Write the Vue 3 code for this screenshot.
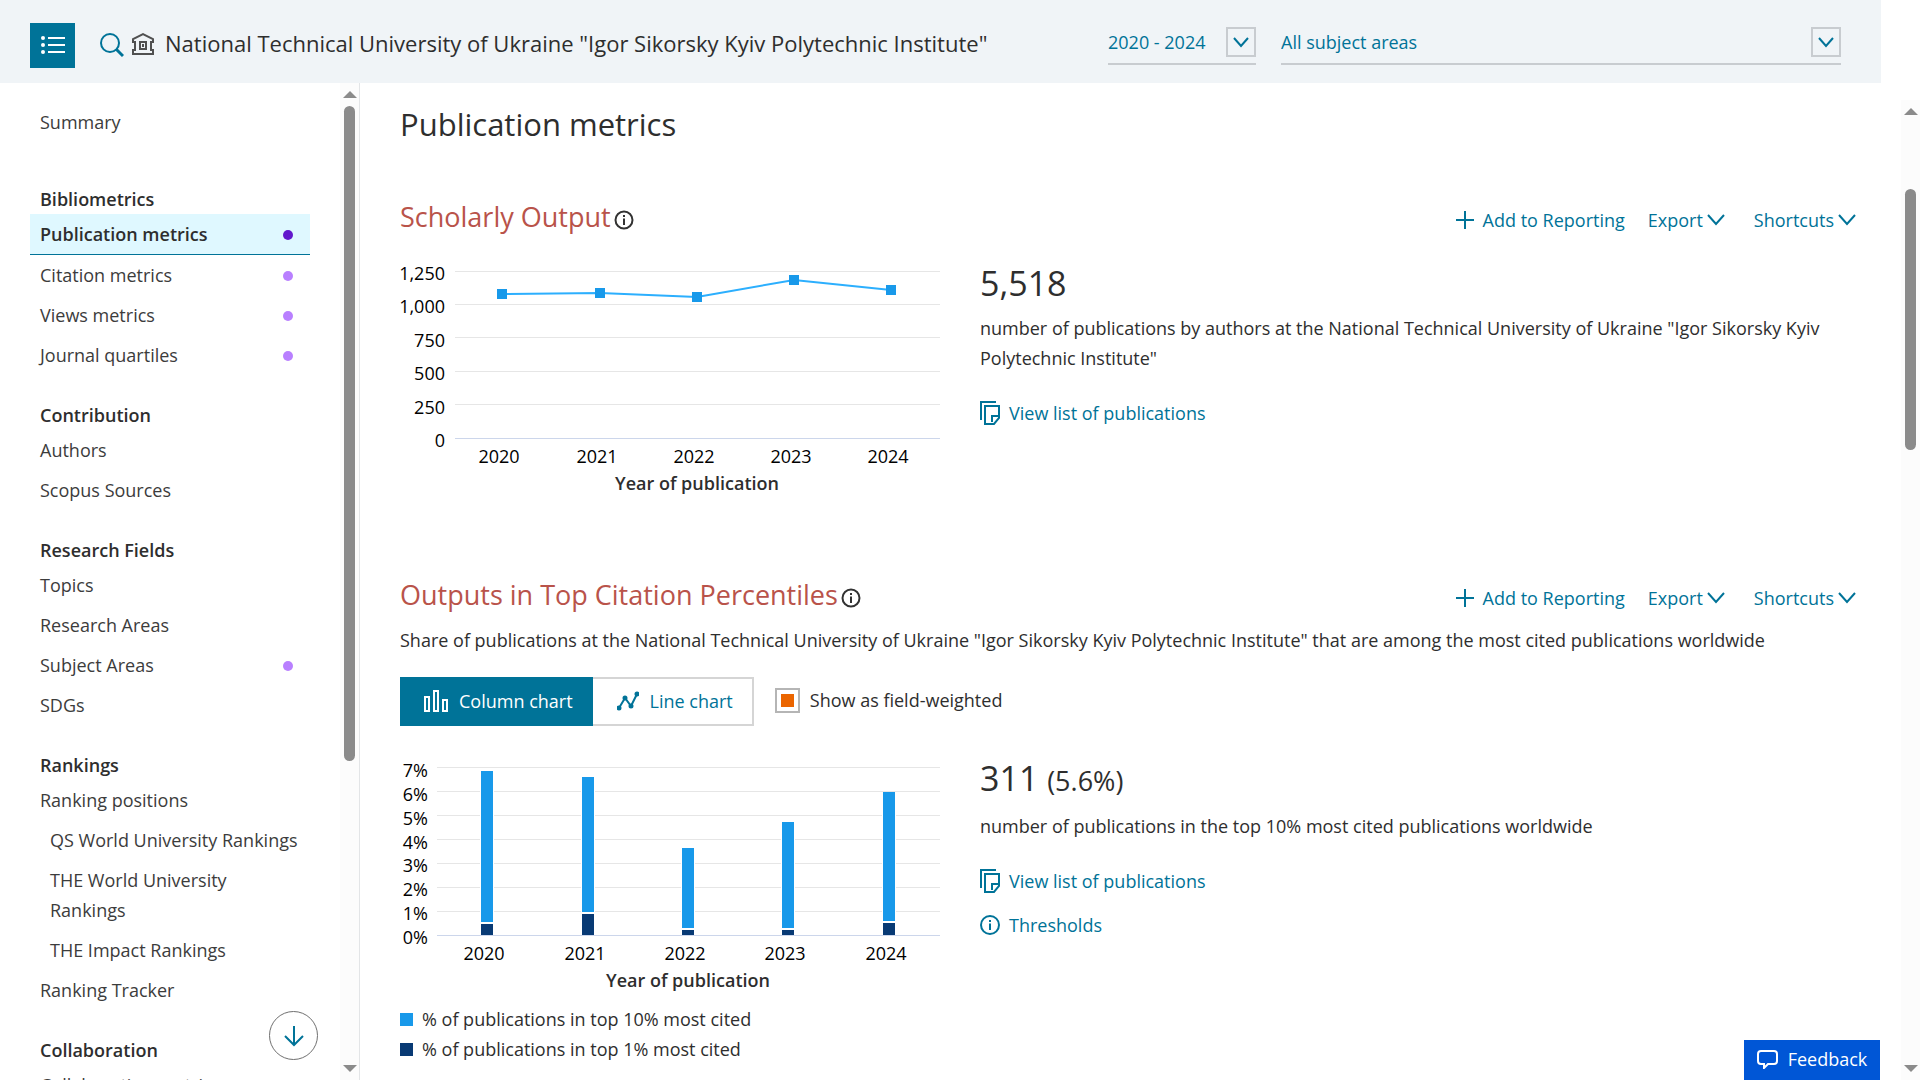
<template>
  <div class="page">
    <header class="top-bar">
      <button type="button" class="menu-btn" aria-label="Menu">
        <svg width="24" height="20" viewBox="0 0 24 20" fill="#fff">
          <circle cx="2" cy="2" r="2" /><circle cx="2" cy="9" r="2" /><circle cx="2" cy="16" r="2" />
          <path d="M7 1h17v2H7zM7 8h17v2H7zM7 15h17v2H7z" />
        </svg>
      </button>
      <button type="button" class="search-btn" aria-label="Search">
        <svg width="24" height="26" viewBox="0 0 24 26" fill="none" stroke="#007398" stroke-width="2">
          <circle cx="10" cy="10" r="9" />
          <path d="M16 16l7 7" stroke-width="3" />
        </svg>
      </button>
      <svg class="institution" width="22" height="24" viewBox="0 0 22 24" fill="none" stroke="#505050" stroke-width="2">
        <path d="M1 10V7l10-5 10 5v3h-2v8h2v4H1v-4h2v-8z" />
        <path d="M8 10h6v7H8zM11 12v3" />
      </svg>
      <h1 class="entity">National Technical University of Ukraine "Igor Sikorsky Kyiv Polytechnic Institute"</h1>
      <div class="picker year">
        <select v-model="year" aria-label="Year range">
          <option>2020 - 2024</option>
          <option>2019 - 2023</option>
        </select>
        <span class="picker-box"><svg width="16" height="11" viewBox="0 0 16 11"><path d="M1 1l7 8 7-8" /></svg></span>
      </div>
      <div class="picker subject">
        <select v-model="subject" aria-label="Subject area">
          <option>All subject areas</option>
          <option>Engineering</option>
        </select>
        <span class="picker-box"><svg width="16" height="11" viewBox="0 0 16 11"><path d="M1 1l7 8 7-8" /></svg></span>
      </div>
    </header>

    <div class="body">
      <aside class="sidebar">
        <nav class="nav">
          <a href="#" class="nav-item summary">Summary</a>
          <div v-for="group in groups" :key="group.title" class="nav-group">
            <h2>{{ group.title }}</h2>
            <a
              v-for="item in group.items"
              :key="item.text"
              href="#"
              class="nav-item"
              :class="{ active: item.active, sub: item.sub }"
            >
              <span>{{ item.text }}</span>
              <i v-if="item.dot" class="dot"></i>
            </a>
          </div>
        </nav>
        <button type="button" class="scroll-down" aria-label="Scroll down">
          <svg width="22" height="22" viewBox="0 0 22 22" fill="none" stroke="#007398" stroke-width="2">
            <path d="M11 1v19M2 11l9 9 9-9" />
          </svg>
        </button>
        <div class="scrollbar nav-scroll">
          <span class="arrow up"></span>
          <span class="thumb"></span>
          <span class="arrow down"></span>
        </div>
      </aside>

      <main class="content">
        <h2 class="page-title">Publication metrics</h2>

        <section v-for="section in sections" :key="section.id" class="metric" :class="section.id">
          <div class="metric-head">
            <h3>{{ section.title }}</h3>
            <svg class="info" width="20" height="20" viewBox="0 0 20 20" fill="none" stroke="#323232" stroke-width="2">
              <circle cx="10" cy="10" r="8.5" />
              <path d="M10 8.5V15M10 5v2" />
            </svg>
            <div class="actions">
              <button type="button" class="link-btn add">
                <svg width="18" height="18" viewBox="0 0 18 18"><path d="M9 0v18M0 9h18" /></svg>
                Add to Reporting
              </button>
              <button type="button" class="link-btn export">
                Export
                <svg width="18" height="12" viewBox="0 0 18 12"><path d="M1 1l8 9 8-9" /></svg>
              </button>
              <button type="button" class="link-btn">
                Shortcuts
                <svg width="18" height="12" viewBox="0 0 18 12"><path d="M1 1l8 9 8-9" /></svg>
              </button>
            </div>
          </div>

          <template v-if="section.id === 'percentiles'">
            <p class="intro">Share of publications at the National Technical University of Ukraine "Igor Sikorsky Kyiv Polytechnic Institute" that are among the most cited publications worldwide</p>
            <div class="toolbar">
              <button type="button" class="tab selected">
                <svg width="26" height="22" viewBox="0 0 26 22" fill="none" stroke="#fff" stroke-width="2">
                  <path d="M2 7h4v14H2zM11 1h4v20h-4zM20 10h4v11h-4z" />
                </svg>
                Column chart
              </button>
              <button type="button" class="tab">
                <svg width="22" height="20" viewBox="0 0 22 20" fill="#007398" stroke="#007398" stroke-width="2">
                  <path d="M2 17L8 7l6 8 6-12" fill="none" />
                  <circle cx="2" cy="17" r="1.5" /><circle cx="8" cy="7" r="1.5" />
                  <circle cx="14" cy="15" r="1.5" /><circle cx="20" cy="3" r="1.5" />
                </svg>
                Line chart
              </button>
              <input id="weighted" v-model="weighted" type="checkbox" />
              <label for="weighted">Show as field-weighted</label>
            </div>
          </template>

          <div class="metric-body">
            <div>
              <svg v-if="section.id === 'output'" class="chart" width="540" height="245">
                <g v-for="(t, i) in lineTicks" :key="t">
                  <line x1="55" x2="540" :y1="183 - i * 33.4" :y2="183 - i * 33.4" :class="{ base: i === 0 }" />
                  <text x="45" :y="192 - i * 33.4" text-anchor="end">{{ t }}</text>
                </g>
                <polyline :points="linePoints.map(p => p.x + ',' + p.y).join(' ')" />
                <rect v-for="p in linePoints" :key="p.year" :x="p.x - 5" :y="p.y - 5" width="10" height="10" fill="#1899ea" />
                <text v-for="p in linePoints" :key="'y' + p.year" :x="p.x - 3" y="208" text-anchor="middle">{{ p.year }}</text>
                <text x="297" y="235" text-anchor="middle" class="axis-title">Year of publication</text>
              </svg>
              <svg v-else class="chart" width="540" height="250">
                <g v-for="i in 8" :key="i">
                  <line x1="37" x2="540" :y1="209 - i * 23.9" :y2="209 - i * 23.9" :class="{ base: i === 1 }" />
                  <text x="28" :y="218 - i * 23.9" text-anchor="end">{{ i - 1 }}%</text>
                </g>
                <g v-for="b in bars" :key="b.year">
                  <rect :x="b.x - 7" :y="b.top" width="14" :height="185 - b.top" fill="#fff" />
                  <rect :x="b.x - 6" :y="b.top" width="12" :height="b.split - b.top - 2" fill="#1899ea" />
                  <rect :x="b.x - 6" :y="b.split" width="12" :height="185 - b.split" fill="#083a74" />
                  <text :x="b.x - 3" y="210" text-anchor="middle">{{ b.year }}</text>
                </g>
                <text x="288" y="237" text-anchor="middle" class="axis-title">Year of publication</text>
              </svg>
              <ul v-if="section.id === 'percentiles'" class="legend">
                <li><i class="key light"></i>% of publications in top 10% most cited</li>
                <li><i class="key dark"></i>% of publications in top 1% most cited</li>
              </ul>
            </div>

            <div class="facts">
              <p class="figure">{{ section.figure }} <small v-if="section.share">{{ section.share }}</small></p>
              <p class="desc">{{ section.desc }}</p>
              <a href="#" class="fact-link">
                <svg width="20" height="24" viewBox="0 0 20 24" fill="none" stroke="#007398" stroke-width="2">
                  <path d="M1 19V1h15" />
                  <path d="M5 5h14v12l-5 6H5z" />
                  <path d="M12 21v-6h6" />
                </svg>
                View list of publications
              </a>
              <a v-if="section.share" href="#" class="fact-link">
                <svg width="20" height="20" viewBox="0 0 20 20" fill="none" stroke="#007398" stroke-width="2">
                  <circle cx="10" cy="10" r="9" />
                  <path d="M10 8.5V15M10 5v2" />
                </svg>
                Thresholds
              </a>
            </div>
          </div>
        </section>
      </main>

      <div class="scrollbar page-scroll">
        <span class="arrow up"></span>
        <span class="thumb"></span>
        <span class="arrow down"></span>
      </div>
    </div>

    <button type="button" class="feedback">
      <svg width="21" height="20" viewBox="0 0 21 20" fill="none" stroke="#fff" stroke-width="2">
        <path d="M4 2h13q3 0 3 3v7q0 3-3 3h-6l-4 4v-4H4q-3 0-3-3V5q0-3 3-3z" />
      </svg>
      Feedback
    </button>
  </div>
</template>

<script setup>
import { ref } from 'vue'

const year = ref('2020 - 2024')
const subject = ref('All subject areas')
const weighted = ref(true)

const groups = [
  {
    title: 'Bibliometrics',
    items: [
      { text: 'Publication metrics', dot: true, active: true },
      { text: 'Citation metrics', dot: true },
      { text: 'Views metrics', dot: true },
      { text: 'Journal quartiles', dot: true },
    ],
  },
  {
    title: 'Contribution',
    items: [{ text: 'Authors' }, { text: 'Scopus Sources' }],
  },
  {
    title: 'Research Fields',
    items: [
      { text: 'Topics' },
      { text: 'Research Areas' },
      { text: 'Subject Areas', dot: true },
      { text: 'SDGs' },
    ],
  },
  {
    title: 'Rankings',
    items: [
      { text: 'Ranking positions' },
      { text: 'QS World University Rankings', sub: true },
      { text: 'THE World University Rankings', sub: true },
      { text: 'THE Impact Rankings', sub: true },
      { text: 'Ranking Tracker' },
    ],
  },
  {
    title: 'Collaboration',
    items: [{ text: 'Collaboration metrics' }],
  },
]

const sections = [
  {
    id: 'output',
    title: 'Scholarly Output',
    figure: '5,518',
    desc: 'number of publications by authors at the National Technical University of Ukraine "Igor Sikorsky Kyiv Polytechnic Institute"',
  },
  {
    id: 'percentiles',
    title: 'Outputs in Top Citation Percentiles',
    figure: '311',
    share: '(5.6%)',
    desc: 'number of publications in the top 10% most cited publications worldwide',
  },
]

const lineTicks = ['0', '250', '500', '750', '1,000', '1,250']

const linePoints = [
  { year: 2020, x: 102, y: 39 },
  { year: 2021, x: 200, y: 38 },
  { year: 2022, x: 297, y: 42 },
  { year: 2023, x: 394, y: 25 },
  { year: 2024, x: 491, y: 35 },
]

// split is where the top 1% part begins
const bars = [
  { year: 2020, x: 87, top: 21, split: 174 },
  { year: 2021, x: 188, top: 27, split: 164 },
  { year: 2022, x: 288, top: 98, split: 180 },
  { year: 2023, x: 388, top: 72, split: 180 },
  { year: 2024, x: 489, top: 42, split: 173 },
]
</script>

<style>
body {
  background: #fff;
}
</style>

<style scoped>
.page {
  height: 100vh;
  display: flex;
  flex-direction: column;
  overflow: hidden;
  position: relative;
  font-family: "Open Sans", "Noto Sans", sans-serif;
  font-size: 18px;
  line-height: 30px;
  color: #2e2e2e;
}
.page * {
  box-sizing: border-box;
}
h1, h2, h3, p, ul {
  margin: 0;
  padding: 0;
  font-weight: 400;
}
button, select {
  font: inherit;
  color: inherit;
  background: none;
  border: 0;
  padding: 0;
}
a {
  color: inherit;
  text-decoration: none;
}
svg {
  flex: none;
}
.top-bar {
  flex: none;
  height: 83px;
  margin-right: 39px;
  padding: 0 40px 0 30px;
  display: flex;
  align-items: center;
  background: #f0f4f7;
}
.menu-btn {
  width: 45px;
  height: 45px;
  margin: 8px 25px 0 0;
  display: flex;
  align-items: center;
  justify-content: center;
  background: #007398;
}
.search-btn {
  display: flex;
  margin: 8px 8px 0 0;
}
.institution {
  margin: 4px 11px 0 0;
}
.entity {
  flex: 1;
  font-size: 22px;
  line-height: 30px;
  padding-top: 2px;
  white-space: nowrap;
}
.picker {
  display: flex;
  position: relative;
  height: 38px;
  margin-top: 9px;
  border-bottom: 2px solid #c8ccd0;
  color: #007398;
}
.picker select {
  flex: 1;
  height: 27px;
  appearance: none;
}
.picker-box {
  position: absolute;
  right: 0;
  top: 0;
  width: 30px;
  height: 30px;
  display: flex;
  align-items: center;
  justify-content: center;
  border: 2px solid #c8ccd0;
  pointer-events: none;
}
.picker-box path, .link-btn path {
  fill: none;
  stroke: #007398;
  stroke-width: 2;
}
.year {
  width: 148px;
  margin-right: 25px;
}
.subject {
  width: 560px;
}
.body {
  flex: 1;
  min-height: 0;
  display: flex;
}
.sidebar {
  flex: none;
  width: 360px;
  display: flex;
  position: relative;
  border-right: 1px solid #e3e5e7;
}
.nav {
  flex: 1;
  padding: 19px 30px 0 30px;
  overflow: hidden;
  color: #3c3c3c;
}
.nav-item {
  display: flex;
  justify-content: space-between;
  padding: 5px 10px;
}
.nav-item.sub {
  padding-left: 20px;
}
.nav-item.active {
  background: #dff8ff;
  border-bottom: 1px solid #007398;
  font-weight: 600;
  color: #2e2e2e;
}
.summary {
  margin-bottom: 42px;
}
.nav-group {
  margin-bottom: 25px;
}
.nav-group h2 {
  padding-left: 10px;
  font-size: 18px;
  font-weight: 600;
  color: #2e2e2e;
}
.dot {
  width: 10px;
  height: 10px;
  margin: 11px 7px 0 0;
  border-radius: 50%;
  background: #b980ff;
}
.active .dot {
  background: #6118cc;
}
.scroll-down {
  position: absolute;
  left: 269px;
  bottom: 20px;
  width: 49px;
  height: 49px;
  display: flex;
  align-items: center;
  justify-content: center;
  border: 1px solid #707070;
  border-radius: 50%;
  background: #fff;
}
.scrollbar {
  flex: none;
  width: 19px;
  display: flex;
  flex-direction: column;
  align-items: center;
  background: #fcfcfc;
}
.arrow {
  border: 7px solid transparent;
  border-top: 0;
  border-bottom: 7px solid #8b8b8b;
}
.arrow.up {
  margin: 8px 0;
}
.arrow.down {
  margin: auto 0 8px;
  border-top: 7px solid #8b8b8b;
  border-bottom: 0;
}
.thumb {
  width: 11px;
  border-radius: 6px;
  background: #8b8b8b;
}
.nav-scroll .thumb {
  height: 65.7%;
}
.page-scroll {
  margin-top: 17px;
}
.page-scroll .thumb {
  height: 26.6%;
  margin-top: 66px;
}
.content {
  flex: 1;
  min-width: 0;
  padding: 21px 45px 0 40px;
  overflow: hidden;
}
.page-title {
  font-size: 31px;
  line-height: 40px;
}
.metric {
  margin-top: 55px;
}
.metric.percentiles {
  margin-top: 77px;
}
.metric-head {
  display: flex;
  align-items: center;
  height: 36px;
}
.metric-head h3 {
  font-size: 27px;
  line-height: 36px;
  color: #b9534a;
}
.info {
  margin: 5px 0 0 3px;
}
.actions {
  display: flex;
  margin: 5px 0 0 auto;
}
.link-btn {
  display: flex;
  align-items: center;
  gap: 4px;
  margin-left: 29px;
  color: #007398;
}
.link-btn.add {
  gap: 9px;
  margin-left: 0;
}
.link-btn.export {
  margin-left: 23px;
}
.intro {
  margin-top: 12px;
}
.toolbar {
  display: flex;
  align-items: center;
  margin-top: 22px;
}
.tab {
  height: 49px;
  padding: 0 19px 2px 24px;
  display: flex;
  align-items: center;
  gap: 11px;
  border: 2px solid #d5d5d5;
  border-left: 0;
  color: #007398;
}
.tab.selected {
  padding: 0 20px 2px 23px;
  gap: 10px;
  border: 0;
  background: #007398;
  color: #fff;
}
.toolbar input {
  appearance: none;
  width: 25px;
  height: 25px;
  margin: 0 10px 3px 21px;
  border: 2px solid #b5b5b5;
}
.toolbar label {
  padding-bottom: 3px;
}
.toolbar input:checked {
  padding: 4px;
  background: #eb6500 content-box;
}
.metric-body {
  display: grid;
  grid-template-columns: 540px 1fr;
  gap: 40px;
  margin-top: 20px;
}
.percentiles .metric-body {
  margin-top: 24px;
}
.chart {
  display: block;
}
.chart line {
  stroke: #e6e6e6;
  stroke-width: 1;
  shape-rendering: crispEdges;
}
.chart line.base {
  stroke: #ccd6eb;
}
.chart text {
  fill: #000;
}
.chart polyline {
  fill: none;
  stroke: #2caffe;
  stroke-width: 2;
}
.chart .axis-title {
  font-weight: 600;
  fill: #2e2e2e;
}
.legend {
  list-style: none;
  margin-top: 4px;
}
.legend li {
  display: flex;
  align-items: center;
}
.key {
  width: 13px;
  height: 13px;
  margin-right: 9px;
}
.light {
  background: #1899ea;
}
.dark {
  background: #083a74;
}
.figure {
  margin: 6px 0 8px;
  font-size: 34px;
  line-height: 44px;
}
.figure small {
  font-size: 27px;
}
.desc {
  margin-bottom: 25px;
}
.fact-link {
  display: flex;
  align-items: center;
  gap: 9px;
  margin-bottom: 14px;
  color: #007398;
}
.feedback {
  position: absolute;
  right: 40px;
  bottom: 0;
  width: 136px;
  height: 40px;
  padding-bottom: 2px;
  display: flex;
  align-items: center;
  justify-content: center;
  gap: 10px;
  background: #0056d6;
  color: #fff;
}
</style>
